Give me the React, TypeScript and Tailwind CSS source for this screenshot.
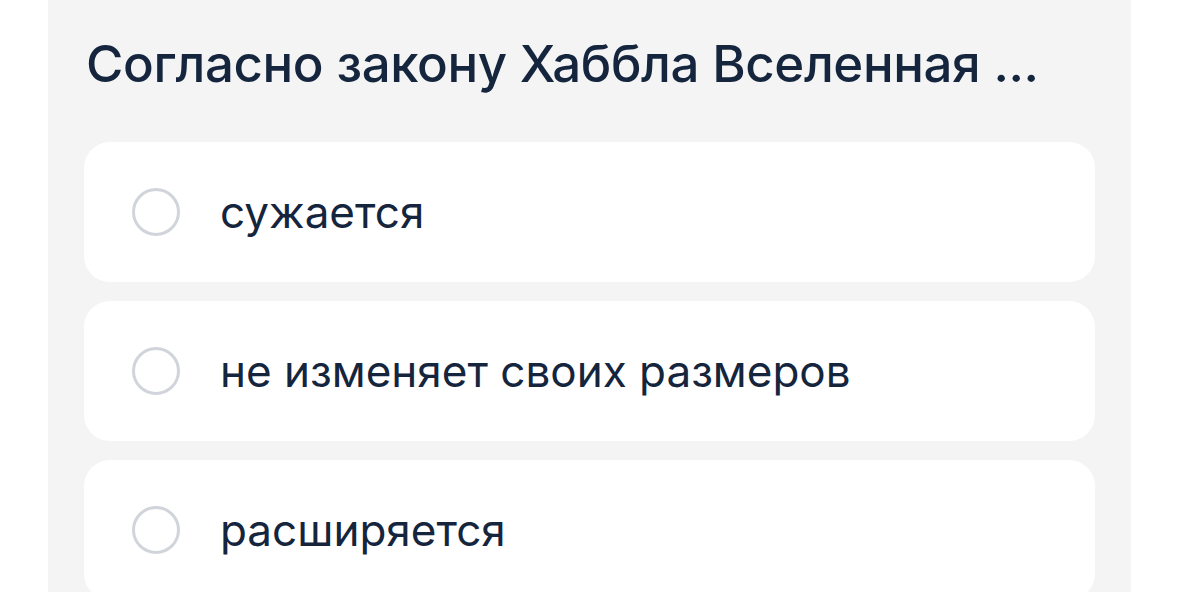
export default function App() {
  const options = ["сужается", "не изменяет своих размеров", "расширяется"];
  return (
    <div className="w-[1179px] h-[592px] overflow-hidden bg-white" style={{ fontFamily: "Inter, 'Noto Sans', sans-serif" }}>
      <div className="ml-[48px] w-[1083px] h-full bg-[#f4f4f4] px-[36px] pt-[36px]">
        <h1 className="text-[51px] leading-[56px] font-medium text-[#14253d] pl-[2px] tracking-[-0.4px]">
          Согласно закону Хаббла Вселенная ...
        </h1>
        <div className="mt-[50px] flex flex-col gap-[19px]">
          {options.map((o) => (
            <div key={o} className="h-[140px] bg-white rounded-[26px] flex items-center pl-[48px] gap-[40px]">
              <div className="w-[48px] h-[48px] rounded-full border-[3px] border-[#d1d5db] shrink-0" />
              <span className="text-[44px] text-[#14253d] leading-none">{o}</span>
            </div>
          ))}
        </div>
      </div>
    </div>
  );
}
